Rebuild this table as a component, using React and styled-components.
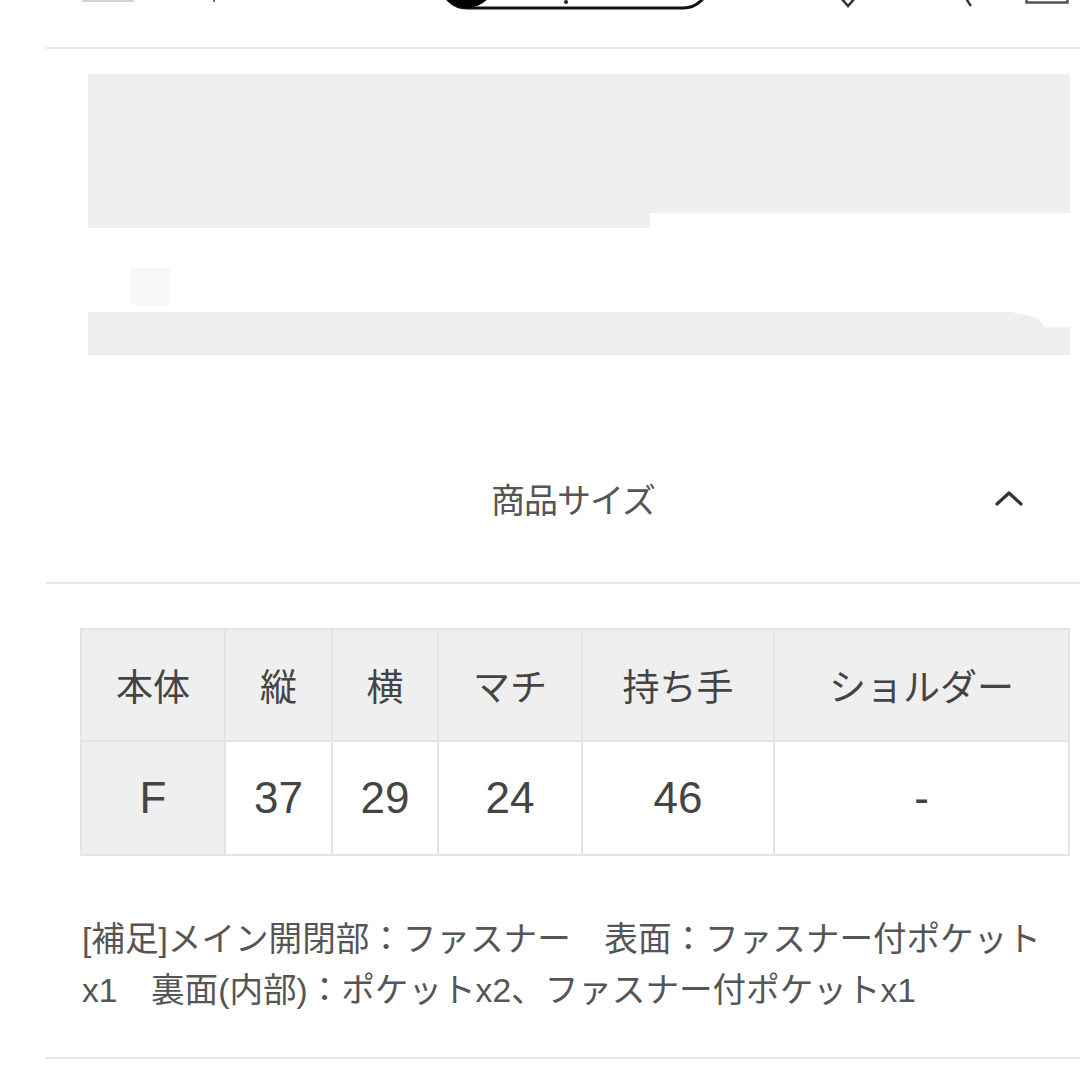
import React from 'react'
import styled, { createGlobalStyle } from 'styled-components'

const GlobalStyle = createGlobalStyle`
  html, body {
    margin: 0;
    padding: 0;
    background: #fff;
    overflow: hidden;
  }
  body {
    font-family: "Liberation Sans", "Noto Sans CJK JP", sans-serif;
    color: #4a4a4a;
  }
`

const Page = styled.div`
  width: 1080px;
  height: 1080px;
  overflow: hidden;
`

const TopBar = styled.div`
  height: 60px;
  margin-top: -50px;
  display: flex;
  align-items: flex-end;
  padding-left: 82px;
`

const NavIcon = styled.svg`
  flex: none;
  display: block;
  margin-left: ${p => p.$left || 0}px;
  margin-bottom: ${p => p.$bottom || 0}px;
`

const Main = styled.div`
  margin-left: 46px;
  width: 1034px;
`

const Divider = styled.div`
  height: 2px;
  background: #e8e8e8;
  margin-top: ${p => p.$top || 0}px;
`

const ImageArea = styled.div`
  margin: 25px 10px 0 42px;
  display: flex;
  flex-direction: column;
`

const ImageTop = styled.div`
  display: flex;
  align-items: flex-start;
`

const Shade = styled.div`
  background: #efefef;
  width: ${p => (p.$w ? `${p.$w}px` : 'auto')};
  flex: ${p => (p.$w ? 'none' : '1 1 auto')};
  height: ${p => p.$h}px;
`

const Band = styled.div`
  flex: none;
  height: 43px;
  background: #efefef;
  clip-path: polygon(0 0, 94% 0, 96.5% 12%, 97.5% 35%, 100% 35%, 100% 100%, 0 100%);
`

const ImageGap = styled.div`
  flex: none;
  height: 84px;
  padding: 40px 0 0 42px;
  box-sizing: border-box;
`

const FaintSquare = styled.div`
  width: 40px;
  height: 37px;
  background: #f8f8f8;
`

const AccordionHeader = styled.div`
  display: grid;
  grid-template-columns: 120px 1fr 100px;
  align-items: center;
  height: 86px;
  padding: 100px 0 41px;
  border-bottom: 2px solid #e6e6e6;
`

const AccordionTitle = styled.div`
  grid-column: 2;
  text-align: center;
  font-family: "Noto Sans CJK JP", sans-serif;
  font-size: 34px;
  color: #555;
  letter-spacing: -1px;
`

const Chevron = styled.svg`
  display: block;
  margin-left: 14px;
`

const Table = styled.table`
  margin: 44px 0 0 34px;
  width: 988px;
  border-collapse: collapse;
  table-layout: fixed;
  border: 2px solid #e6e6e6;
`

const Cell = styled.td`
  width: ${p => p.$w}px;
  height: ${p => p.$h}px;
  padding: 0;
  text-align: center;
  vertical-align: middle;
  border: 2px solid #e4e4e4;
  background: ${p => (p.$shaded ? '#efefef' : '#fff')};
  color: #444;
  font-weight: 400;
  font-family: ${p => (p.$num
    ? '"Liberation Sans", sans-serif'
    : '"Noto Sans CJK JP", sans-serif')};
  font-size: ${p => (p.$num ? 44 : 37)}px;
`

const Note = styled.p`
  margin: 58px 0 0 36px;
  font-family: "Liberation Sans", "Noto Sans CJK JP", sans-serif;
  font-size: 33.6px;
  line-height: 51px;
  color: #555;
  white-space: nowrap;
`

const widths = [142, 105, 104, 142, 190, 293]
const heads = ['本体', '縦', '横', 'マチ', '持ち手', 'ショルダー']
const values = ['F', '37', '29', '24', '46', '-']

export default function App() {
  return (
    <Page>
      <GlobalStyle />
      <TopBar>
        <NavIcon width="52" height="40" viewBox="0 0 52 40" $bottom={8}>
          <rect x="0" y="0" width="52" height="3" fill="#ccc" />
          <rect x="0" y="18" width="52" height="3" fill="#ccc" />
          <rect x="0" y="37" width="52" height="3" fill="#d4d4d4" />
        </NavIcon>
        <NavIcon width="28" height="40" viewBox="0 0 28 40" $left={66} $bottom={6}>
          <path d="M14 4 L14 38" stroke="#777" strokeWidth="2" />
        </NavIcon>
        <NavIcon width="272" height="60" viewBox="0 0 272 60" $left={211}>
          <rect x="2" y="2" width="268" height="56" rx="26" fill="#fff" stroke="#111" strokeWidth="3" />
          <circle cx="28" cy="30" r="28" fill="#000" />
          <circle cx="127" cy="52" r="2" fill="#222" />
        </NavIcon>
        <NavIcon width="36" height="36" viewBox="0 0 36 36" $left={119} $bottom={2}>
          <path
            d="M18 34 L4 18 C-1 11 4 2 11 3 C14 3 17 6 18 9 C19 6 22 3 25 3 C32 2 37 11 32 18 Z"
            fill="none"
            stroke="#333"
            strokeWidth="2.5"
          />
        </NavIcon>
        <NavIcon width="40" height="40" viewBox="0 0 40 40" $left={91} $bottom={2}>
          <path d="M10 2 C4 14 6 28 14 38" fill="none" stroke="#333" strokeWidth="2.5" />
        </NavIcon>
        <NavIcon width="44" height="40" viewBox="0 0 44 40" $left={28} $bottom={6}>
          <rect x="1.5" y="8" width="41" height="30.5" fill="none" stroke="#555" strokeWidth="2.5" />
          <path d="M14 12 V6 a8 8 0 0 1 16 0 V12" fill="none" stroke="#555" strokeWidth="2.5" />
        </NavIcon>
      </TopBar>

      <Main>
        <Divider $top={37} />

        <ImageArea>
          <ImageTop>
            <Shade $w={562} $h={154} />
            <Shade $h={139} />
          </ImageTop>
          <ImageGap>
            <FaintSquare />
          </ImageGap>
          <Band />
        </ImageArea>

        <AccordionHeader>
          <AccordionTitle>商品サイズ</AccordionTitle>
          <Chevron width="30" height="18" viewBox="0 0 30 18">
            <polyline
              points="3,15 15,4 27,15"
              fill="none"
              stroke="#333"
              strokeWidth="3.2"
              strokeLinecap="round"
              strokeLinejoin="round"
            />
          </Chevron>
        </AccordionHeader>

        <Table>
          <tbody>
            <tr>
              {heads.map((h, i) => (
                <Cell key={h} as="th" $w={widths[i]} $h={110} $shaded>
                  {h}
                </Cell>
              ))}
            </tr>
            <tr>
              {values.map((v, i) => (
                <Cell key={i} $w={widths[i]} $h={112} $shaded={i === 0} $num>
                  {v}
                </Cell>
              ))}
            </tr>
          </tbody>
        </Table>

        <Note>
          [補足]メイン開閉部：ファスナー　表面：ファスナー付ポケット
          <br />
          x1　裏面(内部)：ポケットx2、ファスナー付ポケットx1
        </Note>

        <Divider $top={41} />
      </Main>
    </Page>
  )
}
